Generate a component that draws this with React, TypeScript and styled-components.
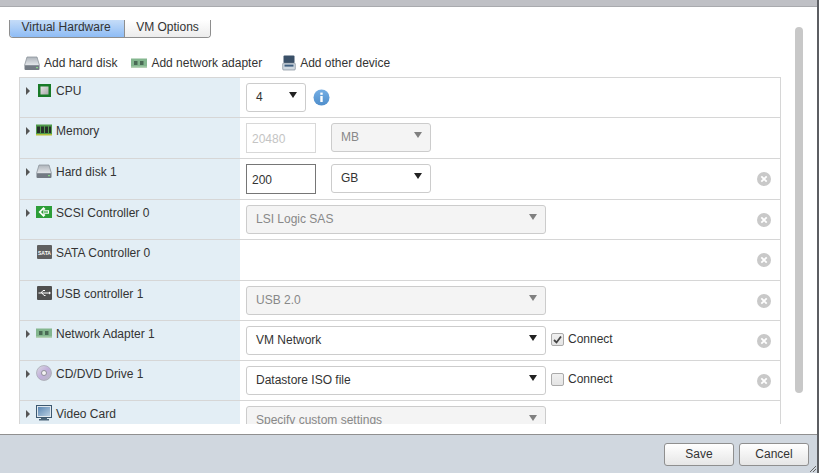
import React from "react";
import styled, { createGlobalStyle } from "styled-components";

const Global = createGlobalStyle`
  html, body { margin: 0; padding: 0; background: #fff; }
  body { font-family: "Liberation Sans", Arial, sans-serif; font-size: 12px; color: #333; }
`;

const Page = styled.div`
  width: 819px; height: 473px; display: flex; flex-direction: column; overflow: hidden;
  position: relative; border-right: 2px solid #5c5e62; box-sizing: border-box;
`;
const TopBar = styled.div`height: 7px; background: #bfc0c5; border-bottom: 1px solid #a9aaae; box-sizing: border-box;`;
const Main = styled.div`flex: 1; min-height: 0; background: #fff; display: flex; flex-direction: column; position: relative; overflow: hidden;`;
const Tabs = styled.div`
  margin: 13px 0 0 9px; width: 202px; height: 18px; display: flex; box-sizing: border-box;
  border: 1px solid #8e8e8e; border-top: 0; border-radius: 0 0 4px 4px; overflow: hidden;
`;
const Tab = styled.div<{ $active?: boolean }>`
  height: 100%; width: ${p => (p.$active ? "115px" : "auto")}; flex: ${p => (p.$active ? "none" : 1)};
  padding-right: ${p => (p.$active ? "2px" : "0")};
  display: flex; align-items: flex-start; justify-content: center; color: #333; line-height: 14px; box-sizing: border-box;
  background: ${p => (p.$active ? "linear-gradient(#c5dcf8, #8ebcf5)" : "linear-gradient(#fff, #ececec)")};
  border-right: ${p => (p.$active ? "1px solid #8e8e8e" : "0")};
`;
const Toolbar = styled.div`display: flex; align-items: center; height: 20px; margin: 15px 0 0 24px; color: #333;`;
const ToolItem = styled.div<{ $gap: number; $mr: number }>`display: flex; align-items: center; gap: ${p => p.$gap}px; margin-right: ${p => p.$mr}px; white-space: nowrap;`;
const TableClip = styled.div`margin: 4px 0 0 19px; width: 762px; height: 347px; overflow: hidden;`;
const Table = styled.div`border: 1px solid #d6d6d6; border-width: 0 1px; box-sizing: border-box; width: 762px;`;
const Row = styled.div<{ $h: number }>`
  display: grid; grid-template-columns: 220px 1fr; height: ${p => p.$h}px; box-sizing: border-box;
  border-top: 1px solid #d6d6d6;
`;
const Label = styled.div`
  background: #e3eef5; display: flex; align-items: flex-start; padding: 4px 0 0 6px; line-height: 18px; color: #333; white-space: nowrap; box-sizing: border-box;
`;
const Arrow = styled.span<{ $hidden?: boolean }>`
  width: 0; height: 0; margin: 5px 0 0 0; border-left: 4px solid ${p => (p.$hidden ? "transparent" : "#555")};
  border-top: 4px solid transparent; border-bottom: 4px solid transparent; flex: none;
`;
const IconBox = styled.span`width: 16px; height: 16px; margin: 0 4px 0 6px; flex: none; display: flex; align-items: center; justify-content: center;`;
const Cell = styled.div`position: relative; display: flex; align-items: flex-start; padding: 5px 0 0 6px; box-sizing: border-box;`;
const Select = styled.div<{ $w: number; $disabled?: boolean }>`
  width: ${p => p.$w}px; height: 29px; box-sizing: border-box; border: 1px solid #ccc; border-radius: 3px;
  background: ${p => (p.$disabled ? "#f4f4f4" : "#fff")}; color: ${p => (p.$disabled ? "#888" : "#333")};
  display: flex; justify-content: space-between; padding: 5px 8px 0 9px; line-height: 16px; margin-right: 15px; flex: none;
`;
const Caret = styled.span<{ $disabled?: boolean }>`
  width: 0; height: 0; margin-top: 3px; border-top: 6px solid ${p => (p.$disabled ? "#808080" : "#222")};
  border-left: 4px solid transparent; border-right: 4px solid transparent;
`;
const Input = styled.div<{ $disabled?: boolean }>`
  width: 70px; height: 30px; box-sizing: border-box; padding: 7px 0 0 5px; line-height: 16px; margin-right: 15px; flex: none;
  border: 1px solid ${p => (p.$disabled ? "#d8d8d8" : "#767676")}; color: ${p => (p.$disabled ? "#c4c4c4" : "#333")};
`;
const Check = styled.span`
  width: 11px; height: 11px; border: 1px solid #aaa; border-radius: 2px; background: linear-gradient(#f0f0f0,#e4e4e4); margin: 7px 4px 0 -10px;
  display: flex; align-items: center; justify-content: center; flex: none;
`;
const CheckText = styled.span`line-height: 16px; margin-top: 5px;`;
const Remove = styled.span`position: absolute; right: 9px; top: 13px; width: 14px; height: 14px;`;
const InfoIcon = styled.svg`margin: 6px 0 0 -8px; flex: none;`;
const Scrollbar = styled.div`position: absolute; left: 795px; top: 20px; width: 8px; height: 366px; background: #c8c8c8; border-radius: 4px;`;
const Footer = styled.div`
  height: 39px; background: #d0d7df; border-top: 1px solid #909090; box-sizing: border-box; display: flex; justify-content: flex-end;
  gap: 5px; padding: 8px 8px 0 0; position: relative;
`;
const Button = styled.div`
  width: 70px; height: 23px; box-sizing: border-box; border: 1px solid #8f8f8f; border-radius: 3px;
  background: linear-gradient(#fff, #e6e6e6); text-align: center; line-height: 20px; color: #333;
`;
const Grip = styled.svg`position: absolute; right: 0; bottom: 0;`;

const HardDisk = () => (
  <svg width="16" height="15" viewBox="0 0 16 15">
    <defs><linearGradient id="hd" x1="0" y1="0" x2="0" y2="1"><stop offset="0" stopColor="#aeb4bb"/><stop offset="1" stopColor="#e6e9ec"/></linearGradient></defs>
    <path d="M3 1h10l2.5 8.5H.5z" fill="url(#hd)" stroke="#8d949c" strokeWidth=".8"/>
    <rect x=".5" y="9.5" width="15" height="4.5" rx="1" fill="#737a83"/>
    <rect x="12" y="11" width="2" height="1.2" fill="#86d486"/>
  </svg>
);
const Net = () => (
  <svg width="16" height="10" viewBox="0 0 16 10">
    <rect y=".5" width="16" height="8.5" fill="#83b68e"/>
    <rect x="3" y="3" width="3.5" height="4" fill="#4a6a55"/>
    <rect x="9" y="3" width="3.5" height="4" fill="#4a6a55"/>
    <rect y="8.5" width="16" height="1.5" fill="#b4d1b4"/>
  </svg>
);
const OtherDevice = () => (
  <svg width="14" height="16" viewBox="0 0 14 16">
    <rect x="1.5" y=".5" width="11" height="7.5" rx="1" fill="#3a5068"/>
    <rect x=".7" y="8" width="12.6" height="7" rx="1" fill="#cfd8e0" stroke="#6c7a88" strokeWidth=".6"/>
    <rect x="2.5" y="9.6" width="9" height="2" fill="#3f5f80"/>
  </svg>
);
const Cpu = () => (
  <svg width="13" height="13" viewBox="0 0 13 13">
    <defs><linearGradient id="cpu" x1="0" y1="0" x2="1" y2="1"><stop offset="0" stopColor="#e6e6e6"/><stop offset="1" stopColor="#a8a8a8"/></linearGradient></defs>
    <rect width="13" height="13" fill="#187a28"/>
    <rect x="2.5" y="2.5" width="8" height="8" fill="url(#cpu)"/>
  </svg>
);
const Memory = () => (
  <svg width="16" height="12" viewBox="0 0 16 12">
    <rect width="16" height="10" y=".5" fill="#4f9a4a"/>
    <rect x="1" y="2.5" width="3" height="6.5" fill="#26302a"/>
    <rect x="5" y="2.5" width="3" height="6.5" fill="#26302a"/>
    <rect x="9" y="2.5" width="3" height="6.5" fill="#26302a"/>
    <rect x="13" y="2.5" width="2" height="6.5" fill="#26302a"/>
    <rect y="10" width="16" height="1.5" fill="#b4bf3a"/>
  </svg>
);
const Scsi = () => (
  <svg width="16" height="12" viewBox="0 0 16 12">
    <rect width="16" height="12" fill="#2c9e38"/>
    <path d="M7.5 1 2.5 6l5 5 2-2-1.6-1.2H13V4.2H7.9L9.5 3z" fill="#fff"/>
    <path d="M7.4 3.5 5 6l2.4 2.5z" fill="#2c9e38"/>
    <path d="M8 5.4h4v1.2H8z" fill="#2c9e38"/>
  </svg>
);
const Sata = () => (
  <svg width="15" height="14" viewBox="0 0 15 14">
    <rect width="15" height="14" rx="1" fill="#5f5f5f"/>
    <text x="7.5" y="9.5" fontSize="6" fontWeight="700" textAnchor="middle" textLength="13" lengthAdjust="spacingAndGlyphs" fill="#fff" fontFamily="Liberation Sans">SATA</text>
  </svg>
);
const Usb = () => (
  <svg width="15" height="14" viewBox="0 0 15 14">
    <rect width="15" height="14" rx="1" fill="#4f4f4f"/>
    <path d="M1.5 7h11M4 7l2-2.5h2M5 7l2 2.5h1.5" stroke="#fff" strokeWidth="1" fill="none"/>
    <path d="m12 5.5 2 1.5-2 1.5z" fill="#fff"/>
  </svg>
);
const Cd = () => (
  <svg width="16" height="16" viewBox="0 0 16 16">
    <defs><linearGradient id="cdg" x1="0" y1="0" x2="1" y2="1"><stop offset="0" stopColor="#dcdde2"/><stop offset=".5" stopColor="#c2b0dc"/><stop offset="1" stopColor="#b7bbc0"/></linearGradient></defs>
    <circle cx="8" cy="8" r="7.5" fill="url(#cdg)" stroke="#9a9ea4" strokeWidth=".6"/>
    <circle cx="8" cy="8" r="2.5" fill="#f4f4f4" stroke="#7d7f86" strokeWidth=".8"/>
  </svg>
);
const Monitor = () => (
  <svg width="16" height="16" viewBox="0 0 16 16">
    <defs><linearGradient id="mon" x1="0" y1="0" x2="1" y2="1"><stop offset="0" stopColor="#5a86b2"/><stop offset="1" stopColor="#b6cde2"/></linearGradient></defs>
    <rect x=".5" y=".5" width="15" height="12" fill="#dfe7ee" stroke="#3c5870"/>
    <rect x="2" y="2" width="12" height="9" fill="url(#mon)"/>
    <rect x="5" y="13" width="6" height="1" fill="#4a6378"/>
    <rect x="3" y="14" width="10" height="1.5" fill="#4a6378"/>
  </svg>
);
const Info = () => (
  <InfoIcon width="17" height="17" viewBox="0 0 17 17">
    <defs><linearGradient id="inf" x1="0" y1="0" x2="0" y2="1"><stop offset="0" stopColor="#74aee4"/><stop offset="1" stopColor="#4f8ecb"/></linearGradient></defs>
    <circle cx="8.5" cy="8.5" r="8" fill="url(#inf)"/>
    <rect x="7.3" y="7" width="2.4" height="6" fill="#fff"/>
    <rect x="7.3" y="3.6" width="2.4" height="2.2" fill="#fff"/>
  </InfoIcon>
);
const X = () => (
  <Remove>
    <svg width="14" height="14" viewBox="0 0 14 14">
      <circle cx="7" cy="7" r="7" fill="#c9c9c9"/>
      <path d="m4.3 4.3 5.4 5.4M9.7 4.3 4.3 9.7" stroke="#fff" strokeWidth="1.8"/>
    </svg>
  </Remove>
);

export default function App() {
  return (
    <Page>
      <Global />
      <TopBar />
      <Main>
        <Tabs>
          <Tab $active>Virtual Hardware</Tab>
          <Tab>VM Options</Tab>
        </Tabs>
        <Toolbar>
          <ToolItem $gap={4} $mr={14}><HardDisk />Add hard disk</ToolItem>
          <ToolItem $gap={4} $mr={20}><Net />Add network adapter</ToolItem>
          <ToolItem $gap={4} $mr={0}><OtherDevice />Add other device</ToolItem>
        </Toolbar>
        <TableClip>
          <Table>
            <Row $h={40}>
              <Label><Arrow /><IconBox><Cpu /></IconBox>CPU</Label>
              <Cell><Select $w={60}>4<Caret /></Select><Info /></Cell>
            </Row>
            <Row $h={41}>
              <Label><Arrow /><IconBox><Memory /></IconBox>Memory</Label>
              <Cell><Input $disabled>20480</Input><Select $w={100} $disabled>MB<Caret $disabled /></Select></Cell>
            </Row>
            <Row $h={41}>
              <Label><Arrow /><IconBox><HardDisk /></IconBox>Hard disk 1</Label>
              <Cell><Input>200</Input><Select $w={100}>GB<Caret /></Select><X /></Cell>
            </Row>
            <Row $h={40}>
              <Label><Arrow /><IconBox><Scsi /></IconBox>SCSI Controller 0</Label>
              <Cell><Select $w={300} $disabled>LSI Logic SAS<Caret $disabled /></Select><X /></Cell>
            </Row>
            <Row $h={41}>
              <Label><Arrow $hidden /><IconBox><Sata /></IconBox>SATA Controller 0</Label>
              <Cell><X /></Cell>
            </Row>
            <Row $h={40}>
              <Label><Arrow $hidden /><IconBox><Usb /></IconBox>USB controller 1</Label>
              <Cell><Select $w={300} $disabled>USB 2.0<Caret $disabled /></Select><X /></Cell>
            </Row>
            <Row $h={40}>
              <Label><Arrow /><IconBox><Net /></IconBox>Network Adapter 1</Label>
              <Cell>
                <Select $w={300}>VM Network<Caret /></Select>
                <Check><svg width="9" height="9" viewBox="0 0 9 9"><path d="m1 5 2.5 2.5L8 1.5" stroke="#444" strokeWidth="1.8" fill="none"/></svg></Check>
                <CheckText>Connect</CheckText><X />
              </Cell>
            </Row>
            <Row $h={40}>
              <Label><Arrow /><IconBox><Cd /></IconBox>CD/DVD Drive 1</Label>
              <Cell>
                <Select $w={300}>Datastore ISO file<Caret /></Select>
                <Check /><CheckText>Connect</CheckText><X />
              </Cell>
            </Row>
            <Row $h={40}>
              <Label><Arrow /><IconBox><Monitor /></IconBox>Video Card</Label>
              <Cell><Select $w={300} $disabled>Specify custom settings<Caret $disabled /></Select></Cell>
            </Row>
          </Table>
        </TableClip>
        <Scrollbar />
      </Main>
      <Footer>
        <Button>Save</Button>
        <Button>Cancel</Button>
        <Grip width="8" height="8" viewBox="0 0 8 8"><path d="M1 7 7 1M4 7l3-3" stroke="#666" strokeWidth="1"/></Grip>
      </Footer>
    </Page>
  );
}
